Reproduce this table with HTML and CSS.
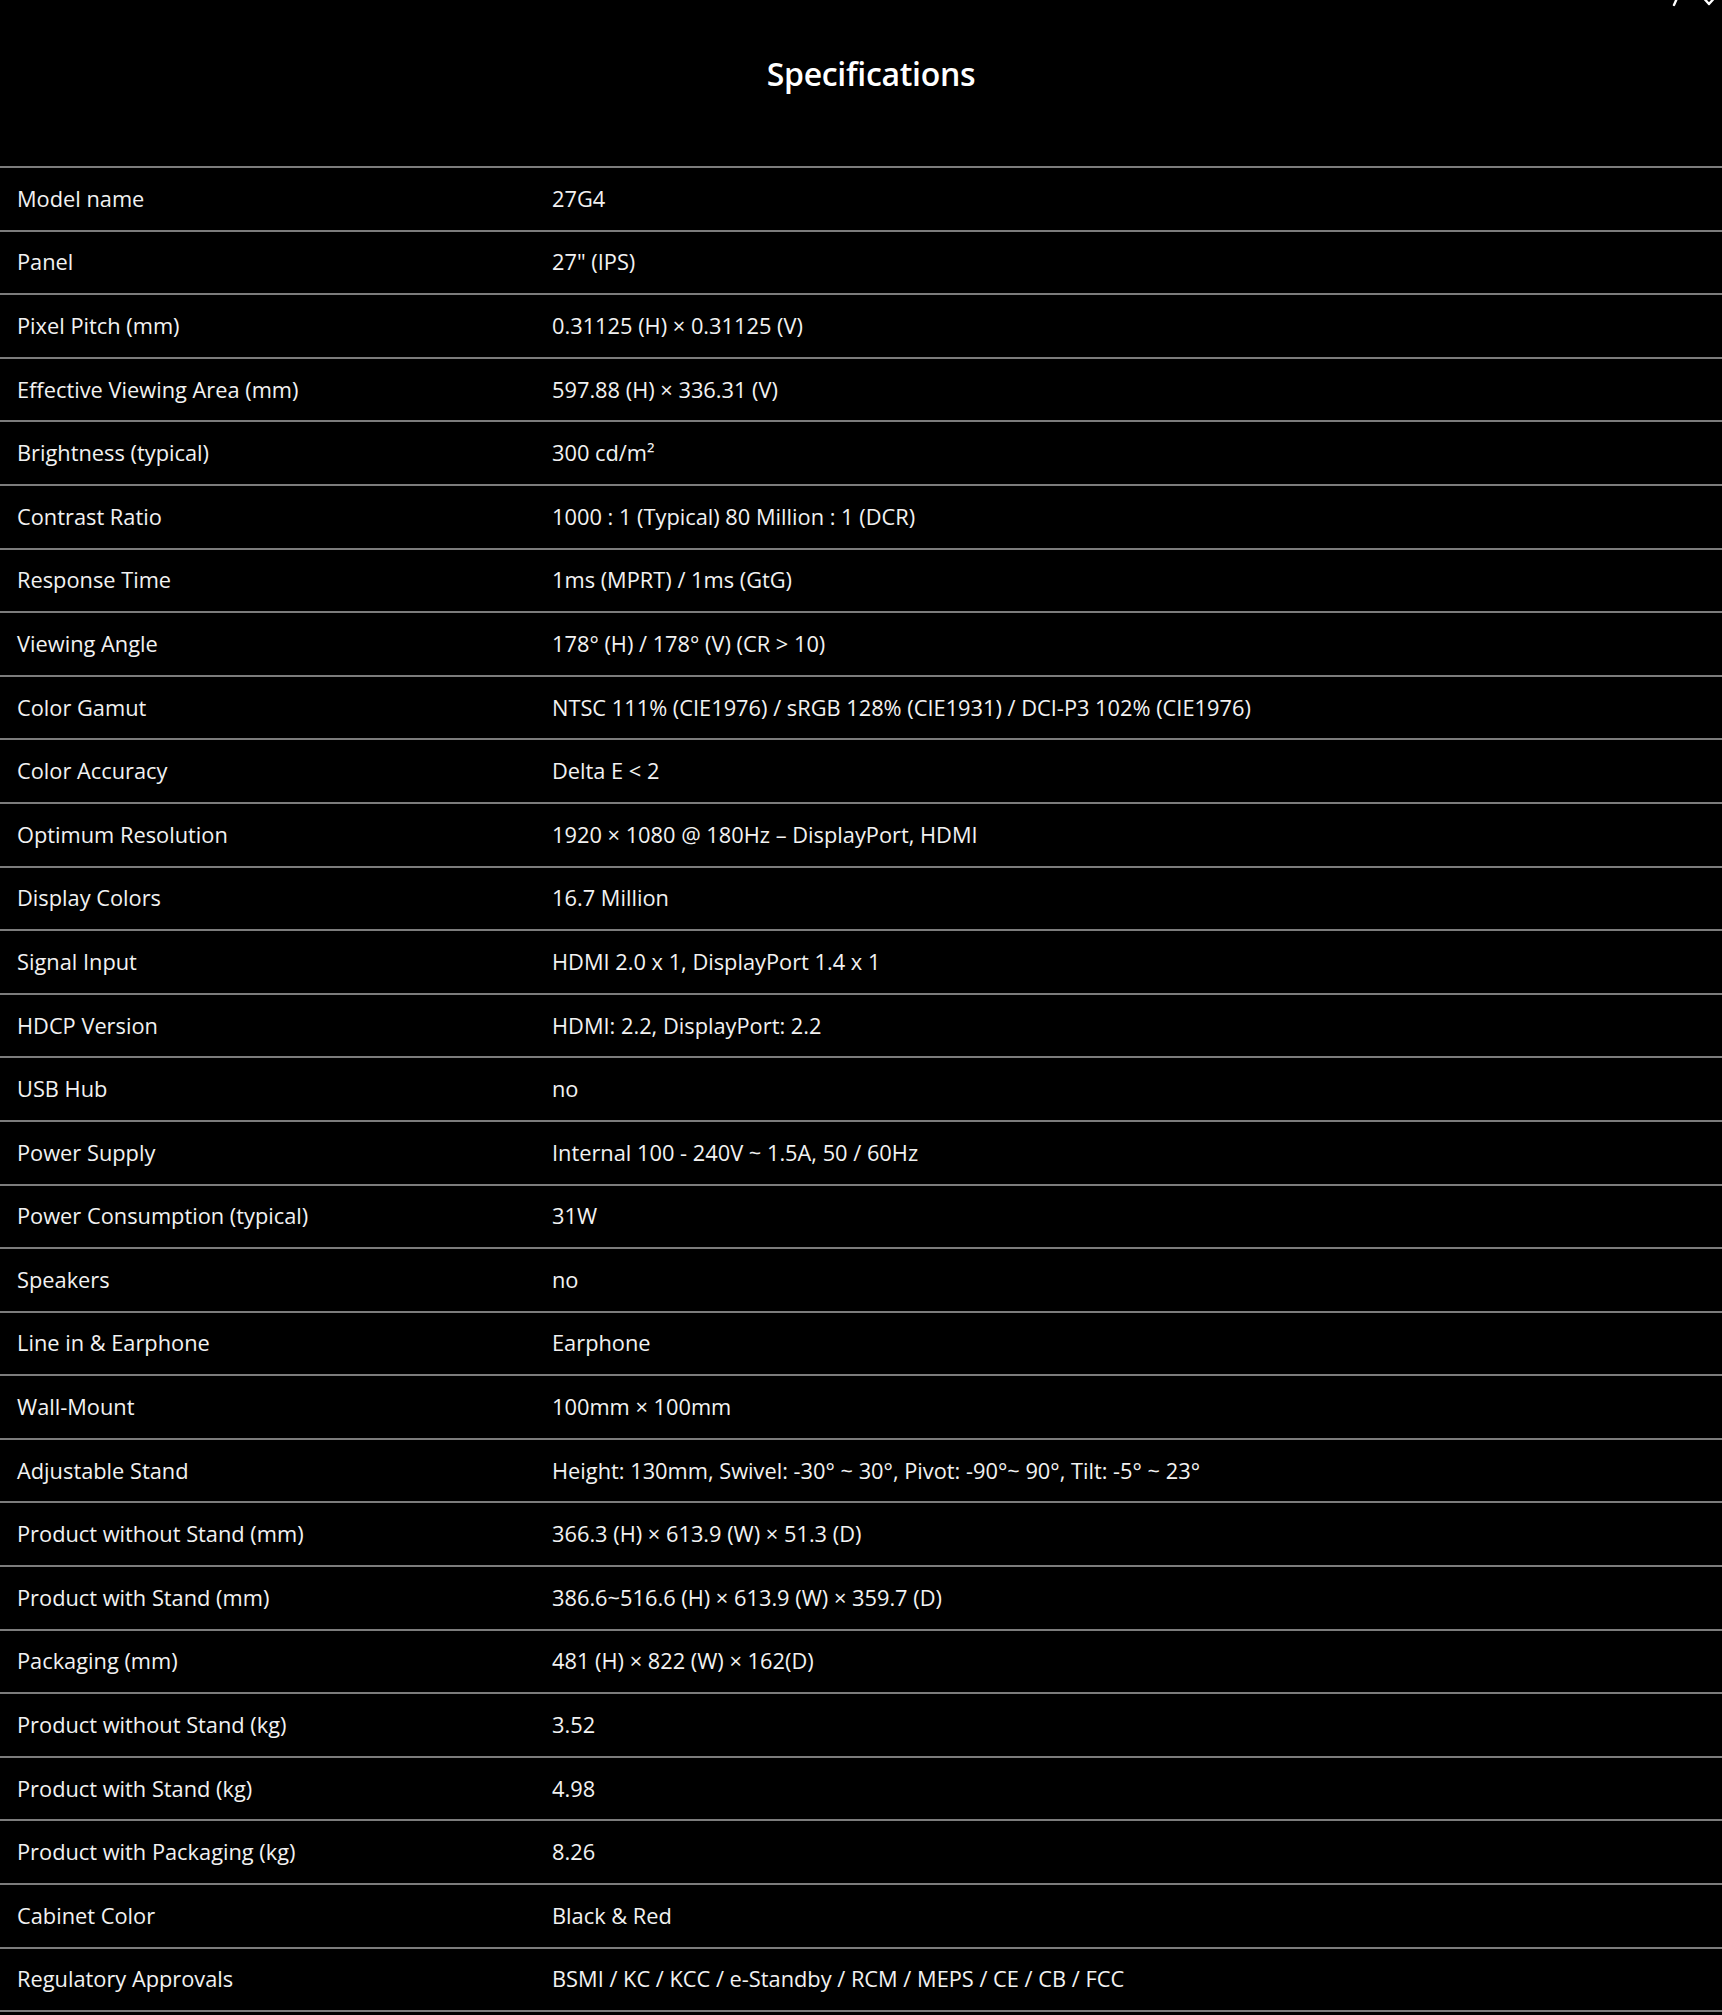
FILE: index.html
```html
<!DOCTYPE html>
<html lang="en">
<head>
<meta charset="utf-8">
<title>Specifications</title>
<link rel="stylesheet" href="styles.css">
</head>
<body>
<div class="corner">
  <svg width="60" height="8" viewBox="0 0 60 8"><path d="M16 -4 L12 5" stroke="#fff" stroke-width="2.4" stroke-linecap="round" fill="none"/><path d="M38 -6 L47 4 M56 -6 L47 4" stroke="#fff" stroke-width="2.4" stroke-linecap="round" fill="none"/></svg>
</div>
<header class="head"><h1 class="title">Specifications</h1></header>
<div class="specs">
  <div class="row"><div class="k">Model name</div><div class="v">27G4</div></div>
  <div class="row"><div class="k">Panel</div><div class="v">27" (IPS)</div></div>
  <div class="row"><div class="k">Pixel Pitch (mm)</div><div class="v">0.31125 (H) × 0.31125 (V)</div></div>
  <div class="row"><div class="k">Effective Viewing Area (mm)</div><div class="v">597.88 (H) × 336.31 (V)</div></div>
  <div class="row"><div class="k">Brightness (typical)</div><div class="v">300 cd/m²</div></div>
  <div class="row"><div class="k">Contrast Ratio</div><div class="v">1000 : 1 (Typical) 80 Million : 1 (DCR)</div></div>
  <div class="row"><div class="k">Response Time</div><div class="v">1ms (MPRT) / 1ms (GtG)</div></div>
  <div class="row"><div class="k">Viewing Angle</div><div class="v">178° (H) / 178° (V) (CR &gt; 10)</div></div>
  <div class="row"><div class="k">Color Gamut</div><div class="v">NTSC 111% (CIE1976) / sRGB 128% (CIE1931) / DCI-P3 102% (CIE1976)</div></div>
  <div class="row"><div class="k">Color Accuracy</div><div class="v">Delta E &lt; 2</div></div>
  <div class="row"><div class="k">Optimum Resolution</div><div class="v">1920 × 1080 @ 180Hz – DisplayPort, HDMI</div></div>
  <div class="row"><div class="k">Display Colors</div><div class="v">16.7 Million</div></div>
  <div class="row"><div class="k">Signal Input</div><div class="v">HDMI 2.0 x 1, DisplayPort 1.4 x 1</div></div>
  <div class="row"><div class="k">HDCP Version</div><div class="v">HDMI: 2.2, DisplayPort: 2.2</div></div>
  <div class="row"><div class="k">USB Hub</div><div class="v">no</div></div>
  <div class="row"><div class="k">Power Supply</div><div class="v">Internal 100 - 240V ~ 1.5A, 50 / 60Hz</div></div>
  <div class="row"><div class="k">Power Consumption (typical)</div><div class="v">31W</div></div>
  <div class="row"><div class="k">Speakers</div><div class="v">no</div></div>
  <div class="row"><div class="k">Line in &amp; Earphone</div><div class="v">Earphone</div></div>
  <div class="row"><div class="k">Wall-Mount</div><div class="v">100mm × 100mm</div></div>
  <div class="row"><div class="k">Adjustable Stand</div><div class="v">Height: 130mm, Swivel: -30° ~ 30°, Pivot: -90°~ 90°, Tilt: -5° ~ 23°</div></div>
  <div class="row"><div class="k">Product without Stand (mm)</div><div class="v">366.3 (H) × 613.9 (W) × 51.3 (D)</div></div>
  <div class="row"><div class="k">Product with Stand (mm)</div><div class="v">386.6~516.6 (H) × 613.9 (W) × 359.7 (D)</div></div>
  <div class="row"><div class="k">Packaging (mm)</div><div class="v">481 (H) × 822 (W) × 162(D)</div></div>
  <div class="row"><div class="k">Product without Stand (kg)</div><div class="v">3.52</div></div>
  <div class="row"><div class="k">Product with Stand (kg)</div><div class="v">4.98</div></div>
  <div class="row"><div class="k">Product with Packaging (kg)</div><div class="v">8.26</div></div>
  <div class="row"><div class="k">Cabinet Color</div><div class="v">Black &amp; Red</div></div>
  <div class="row"><div class="k">Regulatory Approvals</div><div class="v">BSMI / KC / KCC / e-Standby / RCM / MEPS / CE / CB / FCC</div></div>
</div>
</body>
</html>
```
FILE: styles.css
```css
html, body {
  margin: 0;
  padding: 0;
  background: #000;
}
body {
  font-family: "Open Sans", "Noto Sans", sans-serif;
  color: #f2f2f2;
  position: relative;
}
.corner {
  position: absolute;
  top: 0;
  right: 0;
  line-height: 0;
}
.head {
  height: 166px;
  display: flex;
  justify-content: center;
  align-items: flex-start;
  padding-left: 20px;
}
.title {
  margin: 52px 0 0;
  font-size: 32px;
  line-height: 44px;
  font-weight: 600;
  color: #fff;
  letter-spacing: -0.3px;
}
.specs {
  border-top: 2px solid #7c7c7c;
}
.row {
  display: grid;
  grid-template-columns: 552px 1fr;
  align-items: center;
  height: 61.6px;
  border-bottom: 2px solid #7c7c7c;
  font-size: 21.8px;
  line-height: 30px;
}
.k {
  padding-left: 17px;
}
```
